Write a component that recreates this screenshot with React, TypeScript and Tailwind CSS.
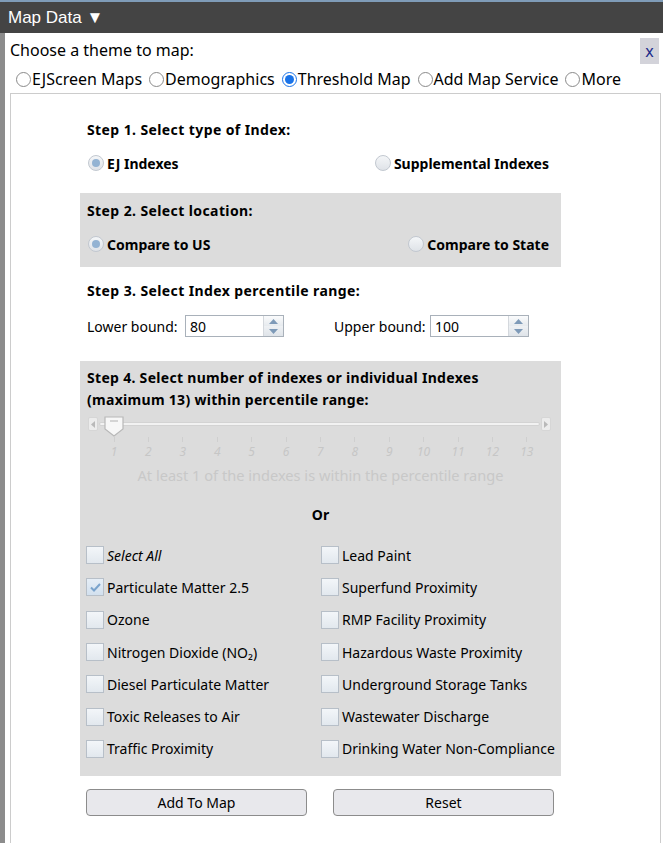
import { useState } from "react";

const leftItems = [
  "Select All",
  "Particulate Matter 2.5",
  "Ozone",
  "Nitrogen Dioxide (NO\u2082)",
  "Diesel Particulate Matter",
  "Toxic Releases to Air",
  "Traffic Proximity",
];

const rightItems = [
  "Lead Paint",
  "Superfund Proximity",
  "RMP Facility Proximity",
  "Hazardous Waste Proximity",
  "Underground Storage Tanks",
  "Wastewater Discharge",
  "Drinking Water Non-Compliance",
];

const themes = ["EJScreen Maps", "Demographics", "Threshold Map", "Add Map Service", "More"];

function ThemeRadio({ checked }: { checked: boolean }) {
  return (
    <span
      className={`mr-[1px] inline-flex h-[15px] w-[15px] shrink-0 items-center justify-center rounded-full border ${
        checked ? "border-[#1a73e8] bg-white" : "border-[#8a8a8a] bg-white"
      }`}
    >
      {checked && <span className="h-[9px] w-[9px] rounded-full bg-[#1a73e8]" />}
    </span>
  );
}

function SoftRadio({ checked }: { checked: boolean }) {
  return (
    <span className="inline-flex h-[16px] w-[16px] shrink-0 items-center justify-center rounded-full border border-[#c2c8d0] bg-gradient-to-b from-[#f4f6f8] to-[#dfe3e8]">
      {checked && <span className="h-[8px] w-[8px] rounded-full bg-[#93b3d3]" />}
    </span>
  );
}

function Box({ checked }: { checked: boolean }) {
  return (
    <span
      className={`inline-flex h-[18px] w-[18px] shrink-0 items-center justify-center border border-[#b7bfc8] bg-gradient-to-b ${
        checked ? "from-[#e6eef6] to-[#d2e0ee]" : "from-[#f3f6f9] to-[#e2e8ee]"
      }`}
    >
      {checked && (
        <svg width="13" height="13" viewBox="0 0 13 13">
          <path d="M2 6.5 L5 9.5 L11 3" fill="none" stroke="#7aa3cc" strokeWidth="2" />
        </svg>
      )}
    </span>
  );
}

function Spinner({ value }: { value: string }) {
  return (
    <div className="flex h-[22px] w-[99px] border border-[#a9b1ba] bg-white">
      <span className="flex-1 pl-[4px] pt-[1px] text-[14px] leading-[20px] text-black">{value}</span>
      <div className="flex w-[20px] flex-col border-l border-[#d4d8dd]">
        <span className="flex flex-1 items-center justify-center bg-gradient-to-b from-[#fafbfc] to-[#e6eaee]">
          <svg width="9" height="5" viewBox="0 0 9 5">
            <path d="M0 5 L4.5 0 L9 5 Z" fill="#7e9ab8" />
          </svg>
        </span>
        <span className="flex flex-1 items-center justify-center bg-gradient-to-b from-[#eef1f4] to-[#dfe4e9]">
          <svg width="9" height="5" viewBox="0 0 9 5">
            <path d="M0 0 L4.5 5 L9 0 Z" fill="#7e9ab8" />
          </svg>
        </span>
      </div>
    </div>
  );
}

function Slider() {
  const ticks = Array.from({ length: 13 }, (_, i) => i + 1);
  return (
    <div className="relative mt-[3px] h-[50px]">
      <span className="absolute left-[8px] top-[3px] flex h-[14px] w-[10px] items-center justify-center rounded-[2px] border border-[#d6d6d6] bg-[#ececec]">
        <svg width="4" height="7" viewBox="0 0 4 7">
          <path d="M4 0 L0 3.5 L4 7 Z" fill="#b9b9b9" />
        </svg>
      </span>
      <span className="absolute left-[19px] right-[21px] top-[8px] h-[4px] rounded-[2px] border border-[#d3d3d3] bg-[#f2f2f2]" />
      <span className="absolute right-[10px] top-[3px] flex h-[14px] w-[10px] items-center justify-center rounded-[2px] border border-[#d6d6d6] bg-[#ececec]">
        <svg width="4" height="7" viewBox="0 0 4 7">
          <path d="M0 0 L4 3.5 L0 7 Z" fill="#b9b9b9" />
        </svg>
      </span>
      <svg className="absolute left-[24px] top-[2px]" width="20" height="22" viewBox="0 0 20 22">
        <path d="M1 1 H19 V13 L10 20 L1 13 Z" fill="#f7f7f7" stroke="#b8b8b8" strokeWidth="1.2" />
        <path d="M6 5 H14" stroke="#bdbdbd" strokeWidth="1.2" />
      </svg>
      {ticks.map((t, i) => (
        <div
          key={t}
          className="absolute top-[23px] flex w-[20px] -translate-x-1/2 flex-col items-center"
          style={{ left: 34 + i * 34.4 }}
        >
          <span className="h-[5px] w-px bg-[#cfcfcf]" />
          <span className="mt-[3px] text-[12px] italic leading-[14px] text-[#c6c6c6]">{t}</span>
        </div>
      ))}
    </div>
  );
}

export default function App() {
  const [theme] = useState("Threshold Map");

  return (
    <div
      className="relative h-[843px] w-[663px] overflow-hidden bg-white text-black"
      style={{ fontFamily: '"Noto Sans", "DejaVu Sans", sans-serif' }}
    >
      <div className="flex h-[33px] items-center border-t-2 border-[#7f9cb8] bg-[#444444] pl-[8px]">
        <span
          className="text-[17px] leading-none text-white"
          style={{ fontFamily: '"Liberation Sans", Arial, sans-serif' }}
        >
          Map Data &#9660;
        </span>
      </div>

      <div className="flex h-[810px]">
        <div className="w-[5px] bg-[#8c8c8c]" />
        <div className="relative flex-1 pl-[5px]">
          <button
            type="button"
            className="absolute right-[4px] top-[5px] flex h-[26px] w-[19px] items-center justify-center bg-[#d3d3da] text-[16px] text-[#1b2a8a]"
          >
            x
          </button>
          <div className="h-[34px] pt-[6px] text-[16px] leading-[22px]">Choose a theme to map:</div>
          <div className="mt-[1px] flex h-[22px] items-center gap-[7px] pl-[6px] text-[16px]">
            {themes.map((t) => (
              <label key={t} className="flex items-center">
                <ThemeRadio checked={t === theme} />
                <span>{t}</span>
              </label>
            ))}
          </div>

          <div className="mt-[3px] h-[760px] w-[651px] border border-[#cccccc] bg-white">
            <div className="ml-[69px] w-[481px] text-[14px]">
              <section className="h-[99px] pt-[25px]">
                <div className="h-[22px] pl-[7px] font-bold leading-[22px] tracking-[0.4px]">
                  Step 1. Select type of Index:
                </div>
                <div className="mt-[11px] flex h-[22px] items-center justify-between pl-[8px] pr-[12px] font-bold">
                  <label className="flex items-center gap-[3px]">
                    <SoftRadio checked />
                    EJ Indexes
                  </label>
                  <label className="flex items-center gap-[3px]">
                    <SoftRadio checked={false} />
                    Supplemental Indexes
                  </label>
                </div>
              </section>

              <section className="h-[74px] bg-[#dcdcdc] pt-[7px]">
                <div className="h-[22px] pl-[7px] font-bold leading-[22px] tracking-[0.4px]">
                  Step 2. Select location:
                </div>
                <div className="mt-[11px] flex h-[22px] items-center justify-between pl-[8px] pr-[12px] font-bold">
                  <label className="flex items-center gap-[3px]">
                    <SoftRadio checked />
                    Compare to US
                  </label>
                  <label className="flex items-center gap-[3px]">
                    <SoftRadio checked={false} />
                    Compare to State
                  </label>
                </div>
              </section>

              <section className="h-[94px] pt-[13px]">
                <div className="h-[22px] pl-[7px] font-bold leading-[22px] tracking-[0.4px]">
                  Step 3. Select Index percentile range:
                </div>
                <div className="mt-[13px] flex h-[22px] items-center pl-[7px]">
                  <span className="w-[98px]">Lower bound:</span>
                  <Spinner value="80" />
                  <span className="ml-[50px] w-[96px]">Upper bound:</span>
                  <Spinner value="100" />
                </div>
              </section>

              <section className="h-[415px] bg-[#dcdcdc] pt-[6px]">
                <div className="pl-[7px] font-bold leading-[22px] tracking-[0.3px]">
                  Step 4. Select number of indexes or individual Indexes
                  <br />
                  (maximum 13) within percentile range:
                </div>
                <Slider />
                <div className="h-[22px] text-center text-[14.6px] leading-[22px] text-[#c8c8c8]">
                  At least 1 of the indexes is within the percentile range
                </div>
                <div className="mt-[18px] h-[22px] text-center font-bold leading-[22px]">Or</div>
                <div className="mt-[13px] grid grid-cols-[235px_1fr] pl-[6px]">
                  {leftItems.map((item, i) => (
                    <div key={item} className="contents">
                      <label className="flex h-[32.3px] items-center gap-[3px]">
                        <Box checked={i === 1} />
                        <span className={i === 0 ? "italic" : ""}>{item}</span>
                      </label>
                      <label className="flex h-[32.3px] items-center gap-[3px]">
                        <Box checked={false} />
                        <span>{rightItems[i]}</span>
                      </label>
                    </div>
                  ))}
                </div>
              </section>

              <div className="mt-[13px] flex h-[27px] gap-[26px] pl-[6px]">
                <button
                  type="button"
                  className="w-[221px] rounded-[4px] border border-[#8c8c8c] bg-[#e8e8ec] text-[14px]"
                >
                  Add To Map
                </button>
                <button
                  type="button"
                  className="w-[221px] rounded-[4px] border border-[#8c8c8c] bg-[#e8e8ec] text-[14px]"
                >
                  Reset
                </button>
              </div>
            </div>
          </div>
        </div>
      </div>
    </div>
  );
}
